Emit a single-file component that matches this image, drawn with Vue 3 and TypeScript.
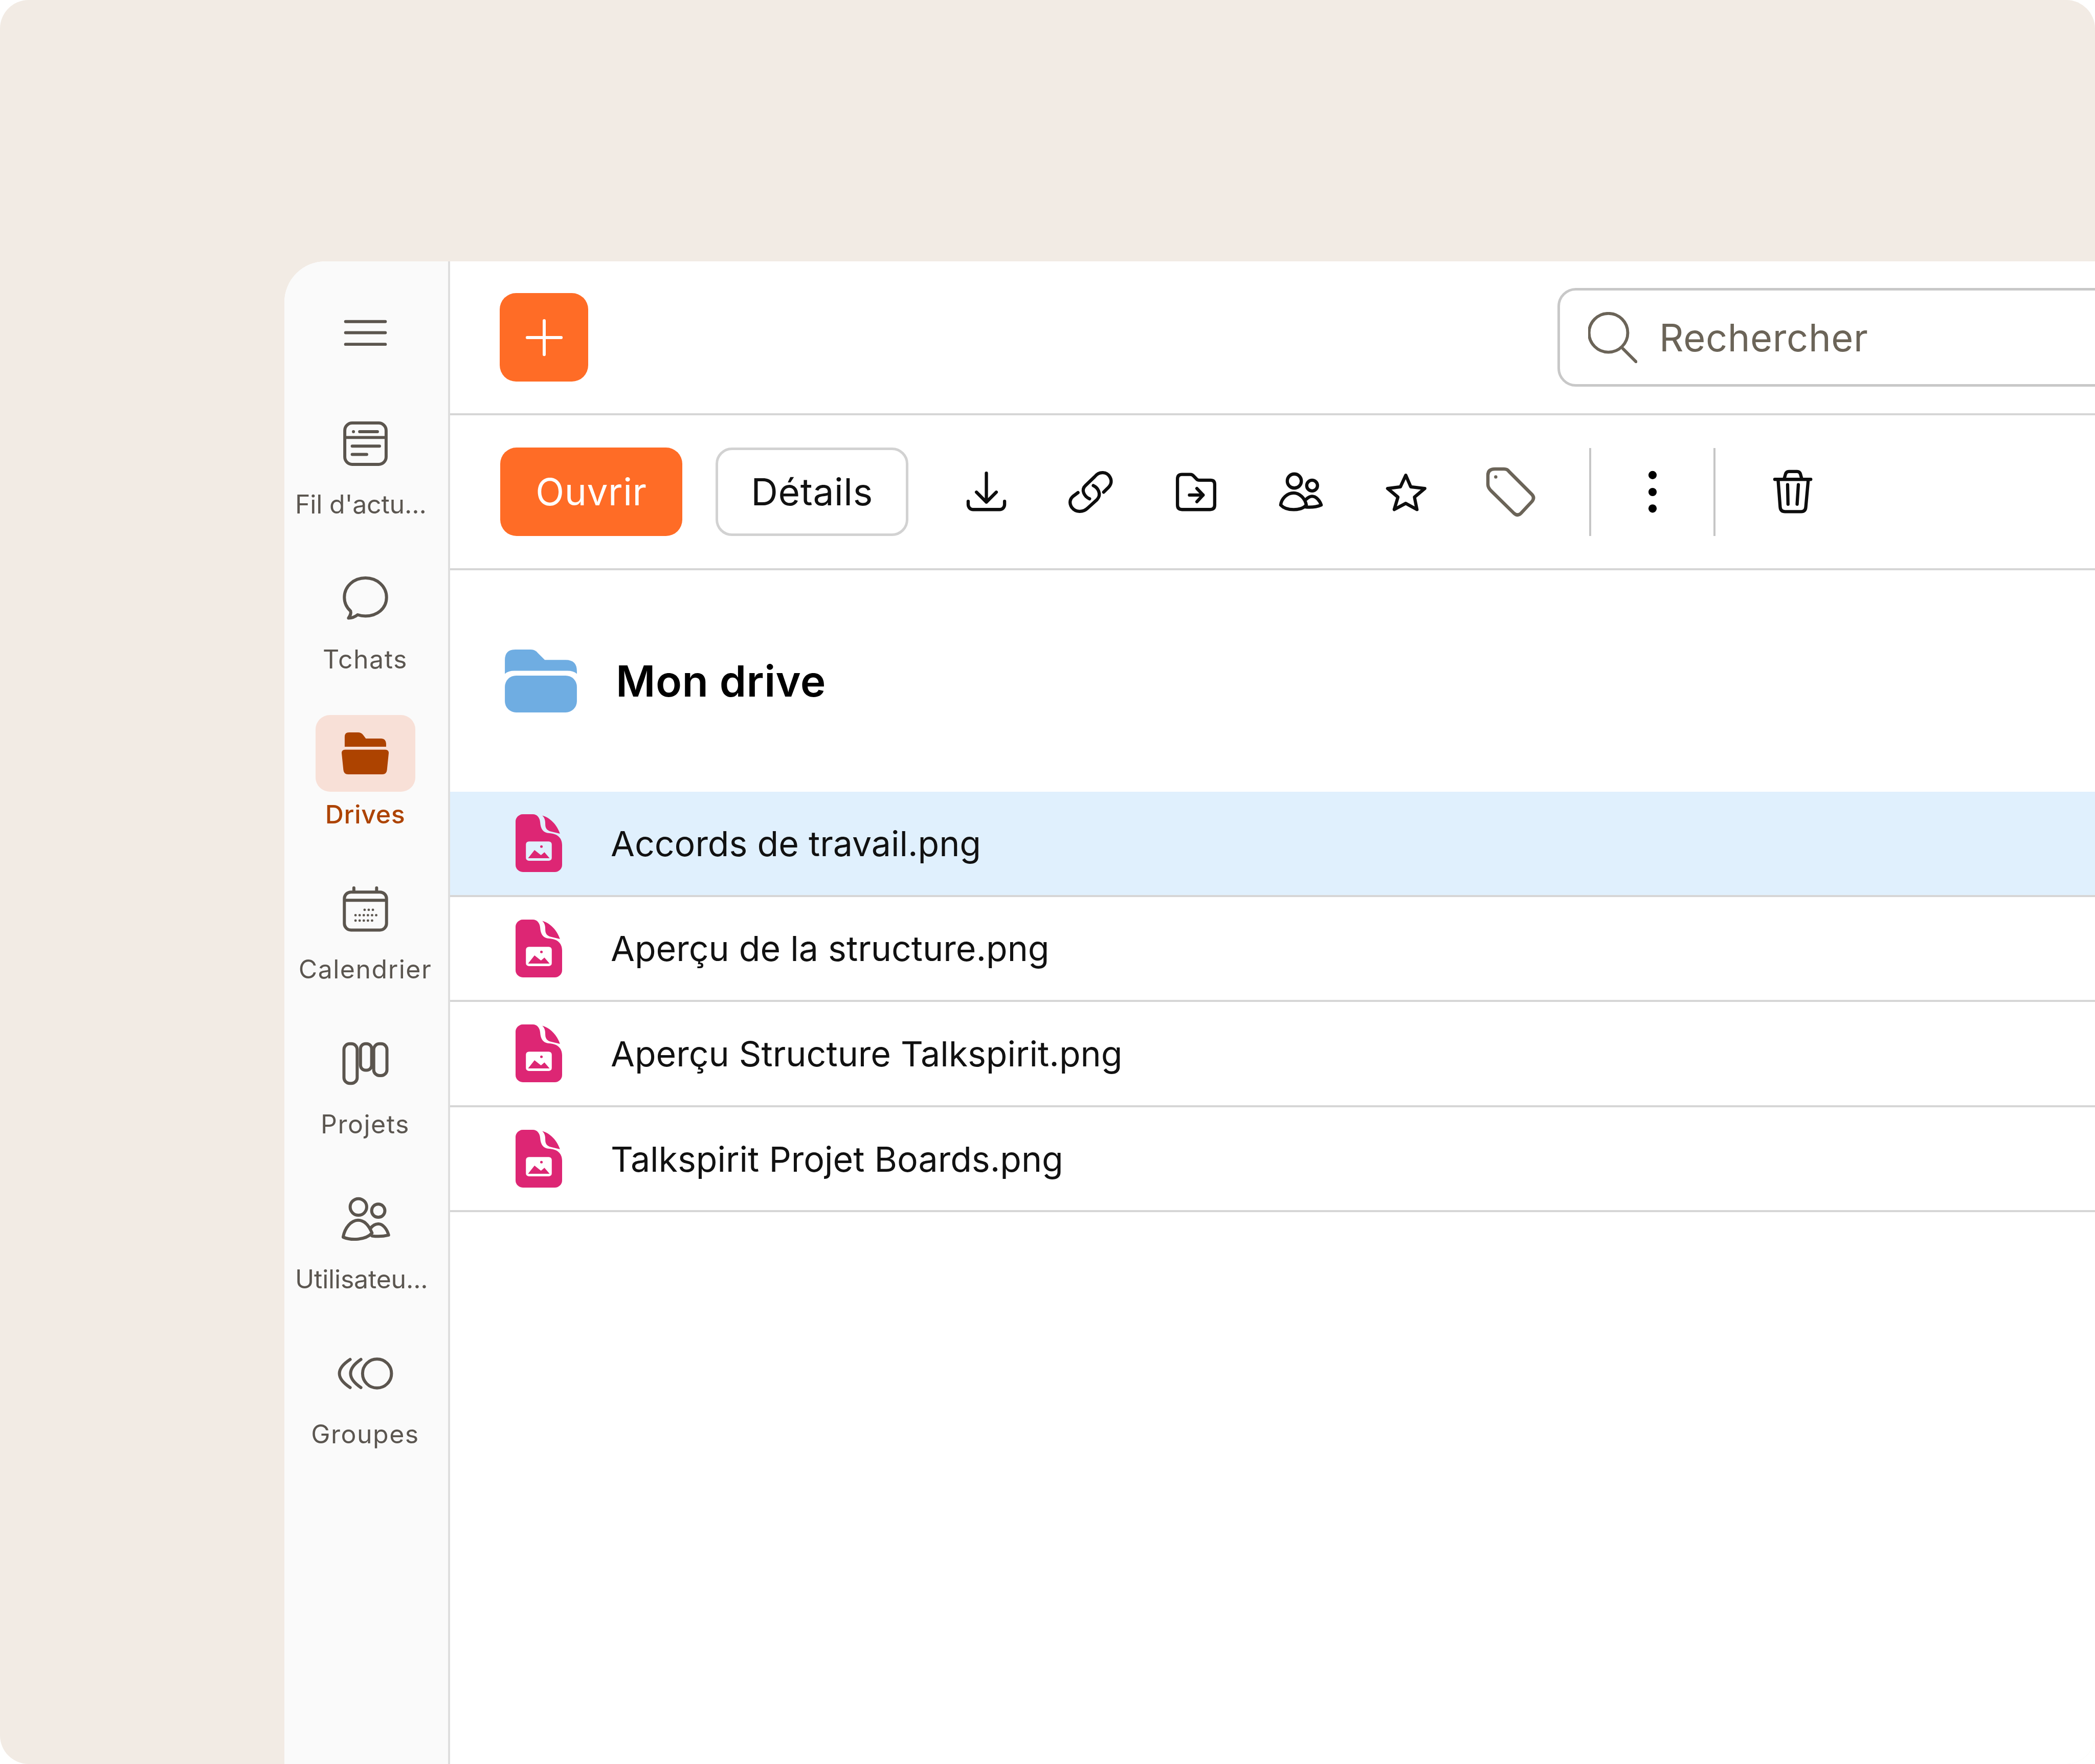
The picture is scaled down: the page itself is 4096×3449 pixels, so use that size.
<script setup lang="ts">
interface NavItem { label: string; icon?: string; active?: boolean; clipped?: boolean }

// every outline icon is one path on a 120 unit box, dots are zero-length round strokes
const icons: Record<string, string> = {
  feed: 'M28 10H92A18 18 0 0 1 110 28V92A18 18 0 0 1 92 110H28A18 18 0 0 1 10 92V28A18 18 0 0 1 28 10ZM10 45H110M31 31h0M46 31H89M28 66H94M28 86H63',
  chat: 'M60 10C88 10 111 30 111 57C111 84 88 102 60 102C53 102 47 101 41 99C35 104 28 107 19 107C23 101 26 96 24 90C15 82 9 70 9 57C9 30 32 10 60 10Z',
  calendar: 'M25 20H95A16 16 0 0 1 111 36V96A16 16 0 0 1 95 112H25A16 16 0 0 1 9 96V36A16 16 0 0 1 25 20ZM9 40H111M32 10V20M87 10V20',
  calendarDots: 'M58 63h0M68 63h0M78 63h0M36 76h0M46 76h0M56 76h0M66 76h0M76 76h0M86 76h0M36 89h0M46 89h0M56 89h0M66 89h0M76 89h0',
  projects: 'M22 12H26A14 14 0 0 1 40 26V94A14 14 0 0 1 26 108H22A14 14 0 0 1 8 94V26A14 14 0 0 1 22 12ZM60 12H63A12 12 0 0 1 75 24V64A12 12 0 0 1 63 76H60A12 12 0 0 1 48 64V24A12 12 0 0 1 60 12ZM94 12H98A14 14 0 0 1 112 26V75A14 14 0 0 1 98 89H94A14 14 0 0 1 80 75V26A14 14 0 0 1 94 12Z',
  users: 'M63 32A20 20 0 1 1 23 32A20 20 0 1 1 63 32ZM107 41A16 16 0 1 1 75 41A16 16 0 1 1 107 41ZM6 105C10 82 26 64 42 64C56 64 68 76 76 95C60 113 25 113 6 105ZM72 84C78 76 84 73 91 73C102 73 112 85 116 100C104 103 90 104 76 102',
  groups: 'M23 26Q-29 60 23 94M49 26Q-1 60 49 94M123 60A35 35 0 1 1 53 60A35 35 0 1 1 123 60Z',
  download: 'M60 15V85M36 61L60 85L84 61M16 83V91A12 12 0 0 0 28 103H92A12 12 0 0 0 104 91V83',
  link: 'M56 77C44 72 34 56 46 45L68 24C80 9 98 12 105 24C112 36 106 46 99 52L90 61M65 45C76 50 86 66 74 79L52 99C40 111 22 110 13 98C5 86 10 76 16 71L28 62',
  move: 'M15 29Q15 18 26 18H46Q52 18 55 23L61 29Q63 32 68 32H95Q105 32 105 42V92Q105 103 94 103H26Q15 103 15 92ZM44 68H77M62 52L77 68L62 84',
  share: 'M61 34A17 17 0 1 1 27 34A17 17 0 1 1 61 34ZM100 45A13 13 0 1 1 74 45A13 13 0 1 1 100 45ZM11 92C13 76 27 63 42 63C57 63 70 76 73 92C60 107 25 107 11 92ZM73 78C78 73 82 71 87 71C97 71 106 82 109 92C100 96 86 98 72 97',
  star: 'M60 20L72 48L106 52L81 73L87 103L60 88L32 103L41 73L16 52L47 48Z',
  tag: 'M22 5H44Q52 5 56 11L111 66Q119 74 112 83L85 112Q77 120 68 112L13 58Q5 50 5 42V20Q5 5 22 5ZM24 24h0',
  trash: 'M16 30H103M39 28L42 17Q44 11 50 11H70Q76 11 78 17L81 28M24 31L29 97Q30 108 41 108H80Q90 108 91 97L97 31M47 43L48 90M73 43L70 90'
}

const navItems: NavItem[] = [
  { label: "Fil d'actu...", icon: 'feed', clipped: true },
  { label: 'Tchats', icon: 'chat' },
  { label: 'Drives', active: true },
  { label: 'Calendrier', icon: 'calendar' },
  { label: 'Projets', icon: 'projects' },
  { label: 'Utilisateu...', icon: 'users', clipped: true },
  { label: 'Groupes', icon: 'groups' }
]

const files: string[] = [
  'Accords de travail.png',
  'Aperçu de la structure.png',
  'Aperçu Structure Talkspirit.png',
  'Talkspirit Projet Boards.png'
]
</script>

<template>
  <div class="page">
    <div class="window">
      <aside class="sidebar">
        <div class="menu-btn">
          <svg class="icon" viewBox="0 0 120 120"><path d="M12 33H108M12 60H108M12 88H108" /></svg>
        </div>
        <nav class="nav">
          <div v-for="item in navItems" :key="item.label" class="nav-item" :class="{ active: item.active }">
            <div class="nav-icon">
              <svg v-if="item.active" class="drive-icon" viewBox="0 0 109 97">
                <path d="M7 33V10Q7 0 17 0H38Q45 0 50 6L56 14H92Q102 14 103 26V33Z" />
                <path d="M8 40H101Q109 40 109 48L105 87Q104 97 94 97H15Q5 97 4 87L0 48Q0 40 8 40Z" />
              </svg>
              <svg v-else class="icon" viewBox="0 0 120 120">
                <path :d="icons[item.icon!]" />
                <path v-if="item.icon === 'calendar'" class="dots" :d="icons.calendarDots" />
              </svg>
            </div>
            <span class="nav-label" :class="{ clipped: item.clipped }">{{ item.label }}</span>
          </div>
        </nav>
      </aside>

      <main class="main">
        <header class="topbar">
          <button class="add-btn">
            <svg class="plus" viewBox="0 0 120 120"><path d="M60 21V99M21 60H99" /></svg>
          </button>
          <div class="search">
            <svg class="search-icon" viewBox="0 0 114 118"><path d="M92 48A45 45 0 1 1 2 48A45 45 0 1 1 92 48ZM81 85L111 115" /></svg>
            <span class="search-text">Rechercher</span>
          </div>
        </header>

        <div class="toolbar">
          <button class="btn primary">Ouvrir</button>
          <button class="btn outline">Détails</button>
          <div class="actions">
            <div class="action"><svg class="icon dark" viewBox="0 0 120 120"><path :d="icons.download" /></svg></div>
            <div class="action"><svg class="icon dark" viewBox="0 0 120 120"><path :d="icons.link" /></svg></div>
            <div class="action"><svg class="icon dark" viewBox="0 0 120 120"><path :d="icons.move" /></svg></div>
            <div class="action"><svg class="icon dark" viewBox="0 0 120 120"><path :d="icons.share" /></svg></div>
            <div class="action"><svg class="icon dark" viewBox="0 0 120 120"><path :d="icons.star" /></svg></div>
            <div class="action"><svg class="icon tag" viewBox="0 0 120 120"><path :d="icons.tag" /></svg></div>
          </div>
          <div class="divider first"></div>
          <div class="action kebab">
            <svg viewBox="0 0 120 120"><circle cx="60" cy="21" r="9.5" /><circle cx="60" cy="60" r="9.5" /><circle cx="60" cy="98" r="9.5" /></svg>
          </div>
          <div class="divider"></div>
          <div class="action trash"><svg class="icon dark" viewBox="0 0 120 120"><path :d="icons.trash" /></svg></div>
        </div>

        <div class="title-row">
          <svg class="folder" viewBox="0 0 166 145">
            <path d="M0 56V24Q0 0 24 0H60Q70 0 76 8L92 24H140Q166 24 166 50V56Q158 49 144 49H22Q8 49 0 56Z" />
            <rect x="0" y="60" width="166" height="85" rx="26" />
          </svg>
          <h1 class="title">Mon drive</h1>
        </div>

        <div class="files">
          <div v-for="(name, i) in files" :key="name" class="file-row" :class="{ selected: i === 0 }">
            <svg class="file-icon" viewBox="0 0 108 134">
              <path fill-rule="evenodd" d="M0 17A17 17 0 0 1 17 0H40C50 0 56 8 57 18C58 34 64 43 78 44C96 45 108 54 108 72V117A17 17 0 0 1 91 134H17A17 17 0 0 1 0 117ZM31 63A7 7 0 0 0 24 70V101A7 7 0 0 0 31 108H77A7 7 0 0 0 84 101V70A7 7 0 0 0 77 63Z" />
              <path d="M62 3C80 8 96 24 103 45L82 40C73 38 69 32 69 24C69 15 68 9 62 3Z" />
              <path d="M29 102L44 83L59 95L67 88L79 102Z" />
              <circle cx="60" cy="75" r="3" />
            </svg>
            <span class="file-name">{{ name }}</span>
          </div>
        </div>
      </main>
    </div>
  </div>
</template>

<style>
html, body {
  margin: 0;
  background: #fff;
}
</style>

<style scoped>
.page {
  box-sizing: border-box;
  width: 4096px;
  height: 3449px;
  padding: 511px 0 0 556px;
  overflow: hidden;
  background: #f2ebe4;
  border-radius: 56px;
  font-family: Inter, "Liberation Sans", sans-serif;
}

.window {
  display: flex;
  height: 100%;
  background: #fff;
  border-top-left-radius: 80px;
  overflow: hidden;
}

.icon {
  display: block;
  width: 97px;
  height: 97px;
  overflow: visible;
  fill: none;
  stroke: #5b554e;
  stroke-width: 7.4;
  stroke-linecap: round;
  stroke-linejoin: round;
}

.icon .dots { stroke-width: 6; }

.icon.dark {
  stroke: #0d0d0d;
  stroke-width: 7.8;
}

.icon.tag {
  stroke: #6b6458;
  stroke-width: 8;
}

/* sidebar */
.sidebar {
  box-sizing: border-box;
  flex: 0 0 324px;
  padding: 64px 4px 0 0;
  background: #fafafa;
  border-right: 4px solid #dedede;
}

.menu-btn {
  display: flex;
  align-items: center;
  justify-content: center;
  height: 150px;
  margin-bottom: 67px;
}

.nav {
  display: flex;
  flex-direction: column;
  gap: 79px;
}

.nav-item {
  display: flex;
  flex-direction: column;
  align-items: center;
}

.nav-icon {
  display: flex;
  align-items: center;
  justify-content: center;
  width: 195px;
  height: 150px;
  border-radius: 28px;
}

.nav-item.active .nav-icon { background: #f8e0d7; }

.drive-icon {
  width: 92px;
  height: 82px;
  fill: #ad4300;
}

.nav-label {
  box-sizing: border-box;
  width: 274px;
  margin-top: 14px;
  font-size: 50px;
  line-height: 60px;
  letter-spacing: 1.5px;
  text-align: center;
  white-space: nowrap;
  color: #5b5650;
}

.nav-label.clipped {
  letter-spacing: -0.2px;
  text-align: left;
}

.nav-item.active .nav-label {
  color: #ad4300;
  font-weight: 500;
  letter-spacing: 0.6px;
}

/* main column */
.main {
  flex: 1;
  min-width: 0;
  overflow: hidden;
}

.topbar {
  box-sizing: border-box;
  display: flex;
  align-items: center;
  height: 301px;
  padding-left: 97px;
  border-bottom: 4px solid #d6d6d6;
}

.add-btn {
  display: flex;
  align-items: center;
  justify-content: center;
  flex: 0 0 173px;
  height: 173px;
  padding: 0;
  border: none;
  border-radius: 32px;
  background: #ff6c26;
}

.plus {
  width: 102px;
  height: 102px;
  fill: none;
  stroke: #fff;
  stroke-width: 7;
  stroke-linecap: round;
}

.search {
  box-sizing: border-box;
  display: flex;
  align-items: center;
  flex: 0 0 1400px;
  height: 193px;
  margin-left: 1895px;
  padding-left: 55px;
  border: 5px solid #c8c8c8;
  border-radius: 36px;
}

.search-icon {
  width: 96px;
  height: 100px;
  fill: none;
  stroke: #6b6458;
  stroke-width: 7;
  stroke-linecap: round;
}

.search-text {
  margin-left: 43px;
  font-size: 74px;
  letter-spacing: 0.6px;
  color: #6b6458;
}

.toolbar {
  box-sizing: border-box;
  display: flex;
  align-items: center;
  height: 303px;
  padding-left: 98px;
  border-bottom: 4px solid #d6d6d6;
}

.btn {
  box-sizing: border-box;
  height: 173px;
  padding: 0;
  border-radius: 32px;
  font-family: inherit;
  font-size: 73px;
  letter-spacing: 0.6px;
}

.btn.primary {
  width: 356px;
  border: none;
  background: #ff6c26;
  color: #fff;
}

.btn.outline {
  width: 377px;
  margin-left: 65px;
  border: 5px solid #d2d2d2;
  background: #fff;
  color: #111;
}

.actions {
  display: flex;
  margin-left: 50px;
}

.action {
  display: flex;
  align-items: center;
  justify-content: center;
  flex: 0 0 205px;
}

.divider {
  flex: 0 0 4px;
  height: 172px;
  background: #c6c6c6;
}

.divider.first { margin-left: 51px; }

.kebab {
  margin: 0 17px;
}

.kebab svg {
  width: 102px;
  height: 102px;
  fill: #000;
}

.trash { margin-left: 49px; }

.title-row {
  display: flex;
  align-items: center;
  height: 433px;
  padding-left: 107px;
}

.folder {
  flex: 0 0 141px;
  height: 123px;
  fill: #6fade2;
}

.title {
  margin: 0 0 0 76px;
  font-size: 84px;
  font-weight: 600;
  letter-spacing: 0.4px;
  color: #000;
}

.file-row {
  box-sizing: border-box;
  display: flex;
  align-items: center;
  height: 205.6px;
  padding-left: 128px;
  border-bottom: 4px solid #d6d6d6;
}

.file-row.selected { background: #e0f0fd; }

.file-icon {
  flex: 0 0 91px;
  height: 113px;
  fill: #dd2674;
}

.file-name {
  margin-left: 95px;
  font-size: 68px;
  color: #111;
}
</style>
